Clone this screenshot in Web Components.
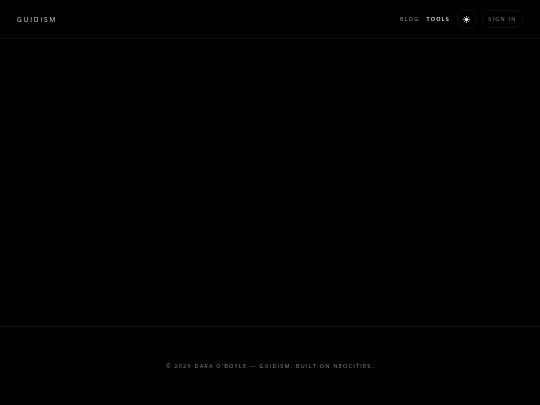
<!DOCTYPE html>
<html lang="en">
<head>
<meta charset="utf-8">
<title>Guidism</title>
<style>
html, body { margin: 0; height: 100%; background: #000; overflow: hidden; }
body { display: flex; flex-direction: column; font-family: "Open Sans", "Liberation Sans", sans-serif; }
main { flex: 1; }
</style>
</head>
<body>
<site-header></site-header>
<main></main>
<site-footer></site-footer>
<script>
class ThemeToggle extends HTMLElement {
    connectedCallback() {
        this.attachShadow({ mode: 'open' });
        this.shadowRoot.innerHTML = `
            <style>
                :host { display: flex; width: 18px; height: 18px; border: 1px solid #111; border-radius: 50%; align-items: center; justify-content: center; }
                svg { display: block; }
            </style>
            <svg width="7" height="7" viewBox="0 0 24 24" fill="#fff" stroke="#ddd" stroke-width="2.6" stroke-linecap="round">
                <circle cx="12" cy="12" r="5"/>
                <path d="M12 1v3M12 20v3M1 12h3M20 12h3M4.2 4.2l2.1 2.1M17.7 17.7l2.1 2.1M4.2 19.8l2.1-2.1M17.7 6.3l2.1-2.1"/>
            </svg>`;
    }
}
customElements.define('theme-toggle', ThemeToggle);

class SiteHeader extends HTMLElement {
    connectedCallback() {
        this.attachShadow({ mode: 'open' });
        this.shadowRoot.innerHTML = `
            <style>
                :host { display: flex; height: 38px; border-bottom: 1px solid #0c0c0c; align-items: center; justify-content: space-between; padding: 0 17px; will-change: opacity; }
                .logo { font-size: 6.5px; font-weight: 500; letter-spacing: 1.85px; color: #d8d8d8; }
                nav { display: flex; align-items: center; }
                a { font-size: 5.5px; font-weight: 500; letter-spacing: 1.2px; color: #969696; text-decoration: none; }
                a.on { font-weight: 600; letter-spacing: 1.1px; color: #e8e8e8; margin-left: 7px; }
                theme-toggle { margin: 0 5px 0 7px; }
                .signin { border: 1px solid #0e0e0e; border-radius: 9px; padding: 0 5.5px; height: 16px; line-height: 16px; color: #808080; }
            </style>
            <a class="logo" href="#">GUIDISM</a>
            <nav>
                <a href="#">BLOG</a>
                <a class="on" href="#">TOOLS</a>
                <theme-toggle></theme-toggle>
                <a class="signin" href="#">SIGN IN</a>
            </nav>`;
    }
}
customElements.define('site-header', SiteHeader);

class SiteFooter extends HTMLElement {
    connectedCallback() {
        this.attachShadow({ mode: 'open' });
        this.shadowRoot.innerHTML = `
            <style>
                :host { display: flex; height: 78px; border-top: 1px solid #141414; align-items: center; justify-content: center; font-size: 5.5px; font-weight: 500; letter-spacing: 1.22px; color: #868686; will-change: opacity; }
            </style>
            © 2026 DARA O'BOYLE — GUIDISM. BUILT ON NEOCITIES.`;
    }
}
customElements.define('site-footer', SiteFooter);
</script>
</body>
</html>
